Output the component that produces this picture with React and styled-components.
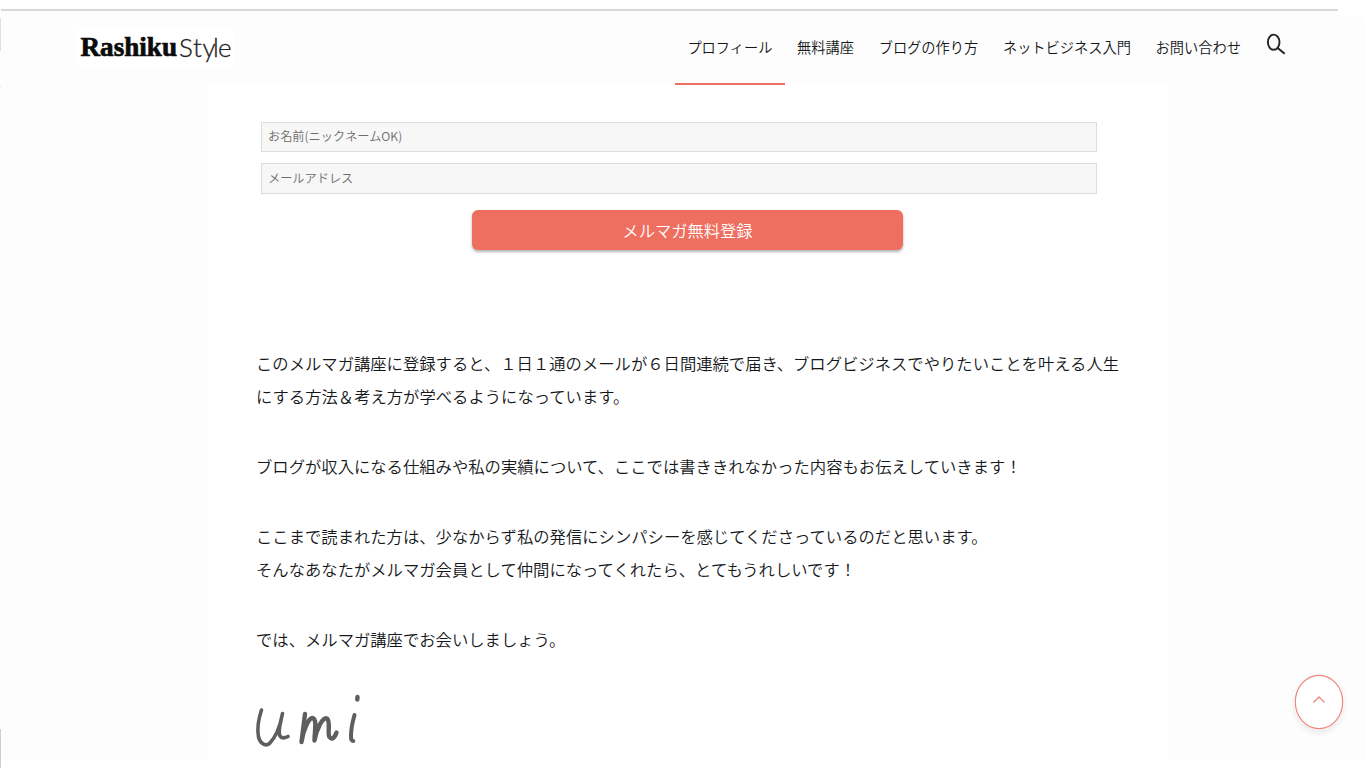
import React from 'react';
import styled, { createGlobalStyle } from 'styled-components';

const GlobalStyle = createGlobalStyle`
    * { box-sizing: border-box; }
    body {
        margin: 0;
        background: #fff;
        color: #15181b;
        font-family: "Noto Sans CJK JP", sans-serif;
        font-weight: 350;
        overflow: hidden;
    }
`;

const menu = [
    'プロフィール',
    '無料講座',
    'ブログの作り方',
    'ネットビジネス入門',
    'お問い合わせ',
];

function Logo() {
    return (
        <LogoBox>
            <svg width="158" height="37" viewBox="76 29 158 37">
                <LogoSerif x="80.5" y="55.7" textLength="96.5" lengthAdjust="spacingAndGlyphs">Rashiku</LogoSerif>
                <LogoSans x="179 193 202.5 213 218" y="57">Style</LogoSans>
            </svg>
        </LogoBox>
    );
}

function Header() {
    return (
        <HeaderBar>
            <Logo />
            <Nav>
                {menu.map((item, i) => (
                    <NavItem key={item} $active={i === 0}>{item}</NavItem>
                ))}
            </Nav>
            <SearchButton aria-label="search">
                <svg width="20" height="22" viewBox="0 0 20 22" fill="none" stroke="#212529">
                    <ellipse cx="7.7" cy="9.2" rx="5.8" ry="7.6" strokeWidth="1.9" />
                    <path d="M11.7 15L18.7 20.8" strokeWidth="2" />
                </svg>
            </SearchButton>
        </HeaderBar>
    );
}

function Signature() {
    return (
        <SignatureBox>
            <svg width="110" height="60" viewBox="252 690 110 60" fill="none" stroke="#5e5e5e" strokeLinecap="round" strokeLinejoin="round">
                <path strokeWidth="3.6" d="M261.5 710C258.5 719 257 729 258.5 737C260 743 265 747 269.5 743.5C275 738 280 727 282.5 713.5C280.5 723 277.5 732 280 736C281.5 738.5 285 738 288 736.5" />
                <path strokeWidth="4.4" d="M305 714L301.5 742C303 731 309 715.5 313.5 718.5C317 721 314.5 732 314.5 740.5C316 730 323 716 327 718.5C331 722 327 733 329.5 737C332 740.5 335 737.5 336.5 732.5" />
                <path strokeWidth="4" d="M354.5 715C352.5 722 351 731 351 736C350.8 740 352 741 353.3 741" />
                <path strokeWidth="4.4" d="M357.5 697L357.3 699.5" />
            </svg>
        </SignatureBox>
    );
}

function App() {
    return (
        <>
            <GlobalStyle />
            <Page>
                <Edge>
                    <EdgeMark $top={18} $height={33} $color="#dfe1e6" />
                    <EdgeMark $top={35} $height={1} $color="#d9d9d9" />
                    <EdgeMark $top={642} $height={39} $color="#cfcfcf" />
                </Edge>
                <Site>
                    <TopRule />
                    <Header />
                    <Article>
                        <Form>
                            <Field placeholder="お名前(ニックネームOK)" />
                            <Field placeholder="メールアドレス" $tall />
                            <Submit>メルマガ無料登録</Submit>
                        </Form>
                        <Paragraph $gap={37}>
                            このメルマガ講座に登録すると、１日１通のメールが６日間連続で届き、ブログビジネスでやりたいことを叶える人生<br />
                            にする方法＆考え方が学べるようになっています。
                        </Paragraph>
                        <Paragraph $gap={37}>
                            ブログが収入になる仕組みや私の実績について、ここでは書ききれなかった内容もお伝えしていきます！
                        </Paragraph>
                        <Paragraph $gap={37}>
                            ここまで読まれた方は、少なからず私の発信にシンパシーを感じてくださっているのだと思います。<br />
                            そんなあなたがメルマガ会員として仲間になってくれたら、とてもうれしいです！
                        </Paragraph>
                        <Paragraph $gap={34}>では、メルマガ講座でお会いしましょう。</Paragraph>
                        <Signature />
                    </Article>
                </Site>
                <ToTop aria-label="top">
                    <svg width="50" height="56" viewBox="0 0 50 56" fill="none" stroke="#f0857a">
                        <ellipse cx="25" cy="28" rx="23.7" ry="26.6" fill="#fff" strokeWidth="1.2" />
                        <path d="M19.5 28.5L25 23L30.5 28.5" strokeWidth="1.3" />
                    </svg>
                </ToTop>
            </Page>
        </>
    );
}

const Page = styled.div`
    display: flex;
    position: relative;
    width: 1366px;
    height: 768px;
    overflow: hidden;
`;

const Edge = styled.div`
    width: 1px;
    flex: none;
`;

const EdgeMark = styled.div`
    height: ${p => p.$height}px;
    margin-top: ${p => p.$top}px;
    background: ${p => p.$color};
`;

const Site = styled.div`
    width: 1365px;
    height: 760px;
    padding-top: 9px;
    display: flex;
    flex-direction: column;
    background: linear-gradient(#fff, #fff) 100% 0 / 28px 17px no-repeat,
        linear-gradient(#fff, #fff) 0 0 / 100% 9px no-repeat, #fdfdfd;
`;

const TopRule = styled.div`
    width: 1337px;
    height: 2px;
    flex: none;
    background: #d9d9d9;
`;

const HeaderBar = styled.header`
    display: flex;
    height: 74px;
    flex: none;
    padding: 0 80px 0 75px;
`;

const LogoBox = styled.div`
    width: 158px;
    height: 37px;
    margin-top: 18px;
    background: #fff;

    svg { display: block; overflow: visible; }
`;

const LogoSerif = styled.text`
    font: bold 28px "Liberation Serif", serif;
    fill: #0b0b0b;
    stroke: #0b0b0b;
    stroke-width: 0.7px;
`;

const LogoSans = styled.text`
    font: 300 26px Lato, sans-serif;
    fill: #222;
    stroke: #222;
    stroke-width: 0.3px;
`;

const Nav = styled.nav`
    display: flex;
    margin-left: auto;
`;

const NavItem = styled.a`
    height: 74px;
    padding: 0 12.1px 0 12.6px;
    font-size: 14.22px;
    line-height: 72px;
    white-space: nowrap;
    box-shadow: ${p => (p.$active ? 'inset 0 -2px #ee6e5f' : 'none')};
`;

const SearchButton = styled.button`
    width: 20px;
    height: 22px;
    margin: 22px 0 0 13px;
    padding: 0;
    border: 0;
    background: none;

    svg { display: block; }
`;

const Article = styled.main`
    width: 961px;
    height: 683px;
    flex: none;
    margin-left: 206px;
    padding: 37px 0 0 49px;
    background: #fff;
`;

const Form = styled.form`
    display: flex;
    flex-direction: column;
    width: 836px;
    height: 225px;
    margin-left: 5px;
`;

const Field = styled.input`
    height: ${p => (p.$tall ? 31 : 30)}px;
    margin-bottom: ${p => (p.$tall ? 16 : 11)}px;
    padding: 0 6px 2px;
    border: 1px solid #ddd;
    border-radius: 0;
    background: #f7f7f7;
    font-family: inherit;
    font-weight: 350;
    font-size: 12.2px;

    &::placeholder { color: #6c6c6c; }
`;

const Submit = styled.button`
    width: 431px;
    height: 40px;
    margin-left: 211px;
    padding: 0;
    border: 0;
    border-radius: 6px;
    background: #ee6e5f;
    box-shadow: 0 2px 3px rgba(0, 0, 0, 0.3);
    color: #fff;
    font-family: inherit;
    font-weight: 350;
    font-size: 16.3px;
`;

const Paragraph = styled.p`
    margin: 0 0 ${p => p.$gap}px;
    font-size: 16.34px;
    line-height: 33px;
    white-space: nowrap;
`;

const SignatureBox = styled.div`
    margin-left: -4px;

    svg { display: block; }
`;

/* floats over the page */
const ToTop = styled.button`
    position: absolute;
    right: 22px;
    top: 674px;
    width: 50px;
    height: 56px;
    padding: 0;
    border: 0;
    border-radius: 50%;
    background: none;
    box-shadow: 0 3px 6px rgba(0, 0, 0, 0.08);

    svg { display: block; }
`;

export default App;
